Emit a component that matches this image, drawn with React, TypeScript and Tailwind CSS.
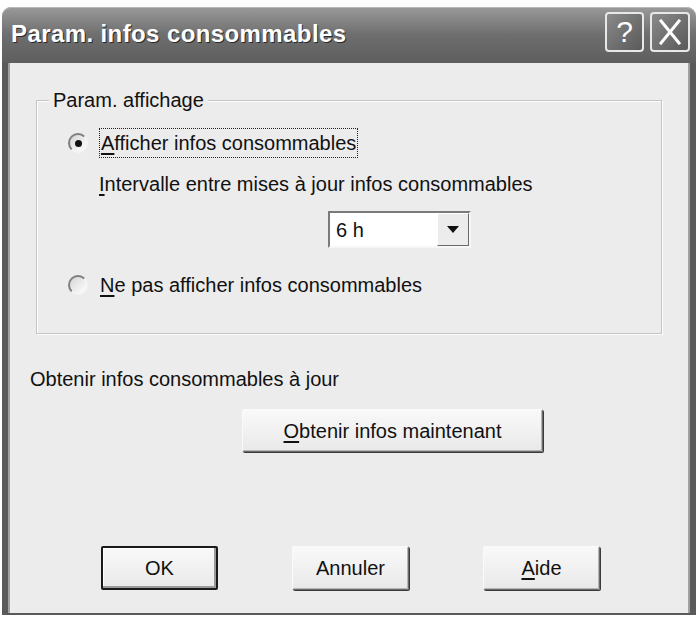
import React from 'react'

const font = "font-['Liberation_Sans',Arial,sans-serif]"

function Radio({ checked }: { checked?: boolean }) {
  return (
    <div className="w-[20px] h-[20px] rounded-full border-2 border-t-[#7e7e7e] border-l-[#7e7e7e] border-r-[#f4f4f4] border-b-[#f4f4f4] bg-gradient-to-br from-[#d6d6d6] to-white flex items-center justify-center shrink-0">
      {checked && <div className="w-[7px] h-[7px] rounded-full bg-[#111]" />}
    </div>
  )
}

function Button({ children, primary, className }: { children: React.ReactNode; primary?: boolean; className?: string }) {
  return (
    <div
      className={
        'flex items-center justify-center rounded-[2px] bg-gradient-to-b from-[#f9f9f9] to-[#e9e9e9] text-[20px] text-[#111] ' +
        (primary
          ? 'border-2 border-[#1a1a1a] shadow-[inset_-2px_-2px_0_#9a9a9a,inset_1px_1px_0_#fff] '
          : 'border border-t-[#fafafa] border-l-[#fafafa] border-r-[#6a6a6a] border-b-[#6a6a6a] shadow-[1px_1px_0_#3a3a3a,inset_-1px_-1px_0_#b5b5b5] ') +
        (className ?? '')
      }
    >
      {children}
    </div>
  )
}

export default function App() {
  return (
    <div className={`w-[698px] h-[617px] bg-white pt-[7px] px-[2px] ${font}`}>
      <div className="flex flex-col h-[608px]">
        {/* title bar */}
        <div className="h-[56px] rounded-t-[9px] bg-gradient-to-b from-[#9a9a9a] via-[#6e6e6e] to-[#5e5e5e] flex items-center pl-[9px] pr-[6px] shadow-[inset_0_1px_0_#b8b8b8]">
          <span className="text-white font-bold text-[24px] tracking-[0.4px] [text-shadow:1px_1px_0_#2a2a2a] mt-[-2px]">
            Param. infos consommables
          </span>
          <div className="ml-auto flex gap-[6px] mt-[-6px]">
            <div className="w-[39px] h-[40px] rounded-[4px] border-2 border-[#e8e8e8] bg-gradient-to-br from-[#8a8a8a] to-[#5a5a5a] flex items-center justify-center text-white text-[30px] leading-none">
              ?
            </div>
            <div className="w-[40px] h-[40px] rounded-[4px] border-2 border-[#e8e8e8] bg-gradient-to-br from-[#8a8a8a] to-[#5a5a5a] flex items-center justify-center">
              <svg width="24" height="26" viewBox="0 0 24 26">
                <path d="M3 2 L21 24 M21 2 L3 24" stroke="#fff" strokeWidth="3" strokeLinecap="square" />
              </svg>
            </div>
          </div>
        </div>

        {/* body */}
        <div className="flex-1 bg-[#ececec] border-l-[6px] border-r-[6px] border-b-[2px] border-l-[#5a5a5a] border-r-[#5a5a5a] border-b-[#5a5a5a] shadow-[inset_2px_0_0_#a0a0a0,inset_-2px_0_0_#a0a0a0] flex flex-col text-[20px] text-[#111]">
          <fieldset className="ml-[28px] mr-[28px] mt-[25px] h-[246px] border border-[#c4c4c4] shadow-[inset_1px_1px_0_#fff,1px_1px_0_#fff]">
            <legend className="ml-[12px] px-[4px] leading-[24px] bg-[#ececec]">Param. affichage</legend>
            <div className="pl-[31px] flex flex-col">
              <div className="flex items-center mt-[15px] h-[32px]">
                <Radio checked />
                <span className="ml-[11px] border border-dotted border-[#222] px-[1px] leading-[28px]">
                  <span className="underline underline-offset-[3px]">A</span>fficher infos consommables
                </span>
              </div>
              <div className="ml-[31px] mt-[13px] leading-[24px]">
                <span className="underline underline-offset-[3px]">I</span>ntervalle entre mises à jour infos consommables
              </div>
              <div className="ml-[260px] mt-[15px] w-[143px] h-[37px] border-2 border-t-[#7a7a7a] border-l-[#7a7a7a] border-r-[#f6f6f6] border-b-[#f6f6f6] bg-white flex items-center">
                <span className="ml-[6px] flex-1">6 h</span>
                <div className="w-[32px] h-full bg-[#ececec] border border-t-white border-l-white border-r-[#6a6a6a] border-b-[#6a6a6a] flex items-center justify-center">
                  <svg width="12" height="8" viewBox="0 0 12 8">
                    <path d="M0 0 H12 L6 7 Z" fill="#111" />
                  </svg>
                </div>
              </div>
              <div className="flex items-center mt-[25px] h-[24px]">
                <Radio />
                <span className="ml-[12px]">
                  <span className="underline underline-offset-[3px]">N</span>e pas afficher infos consommables
                </span>
              </div>
            </div>
          </fieldset>

          <div className="ml-[22px] mt-[33px] leading-[24px]">Obtenir infos consommables à jour</div>

          <Button className="ml-[234px] mt-[18px] w-[301px] h-[43px]">
            <span>
              <span className="underline underline-offset-[3px]">O</span>btenir infos maintenant
            </span>
          </Button>

          <div className="flex ml-[93px] mt-[94px] gap-[74px]">
            <Button primary className="w-[117px] h-[44px]">OK</Button>
            <Button className="w-[117px] h-[44px]">Annuler</Button>
            <Button className="w-[117px] h-[44px]">
              <span>
                <span className="underline underline-offset-[3px]">A</span>ide
              </span>
            </Button>
          </div>
        </div>
      </div>
    </div>
  )
}
